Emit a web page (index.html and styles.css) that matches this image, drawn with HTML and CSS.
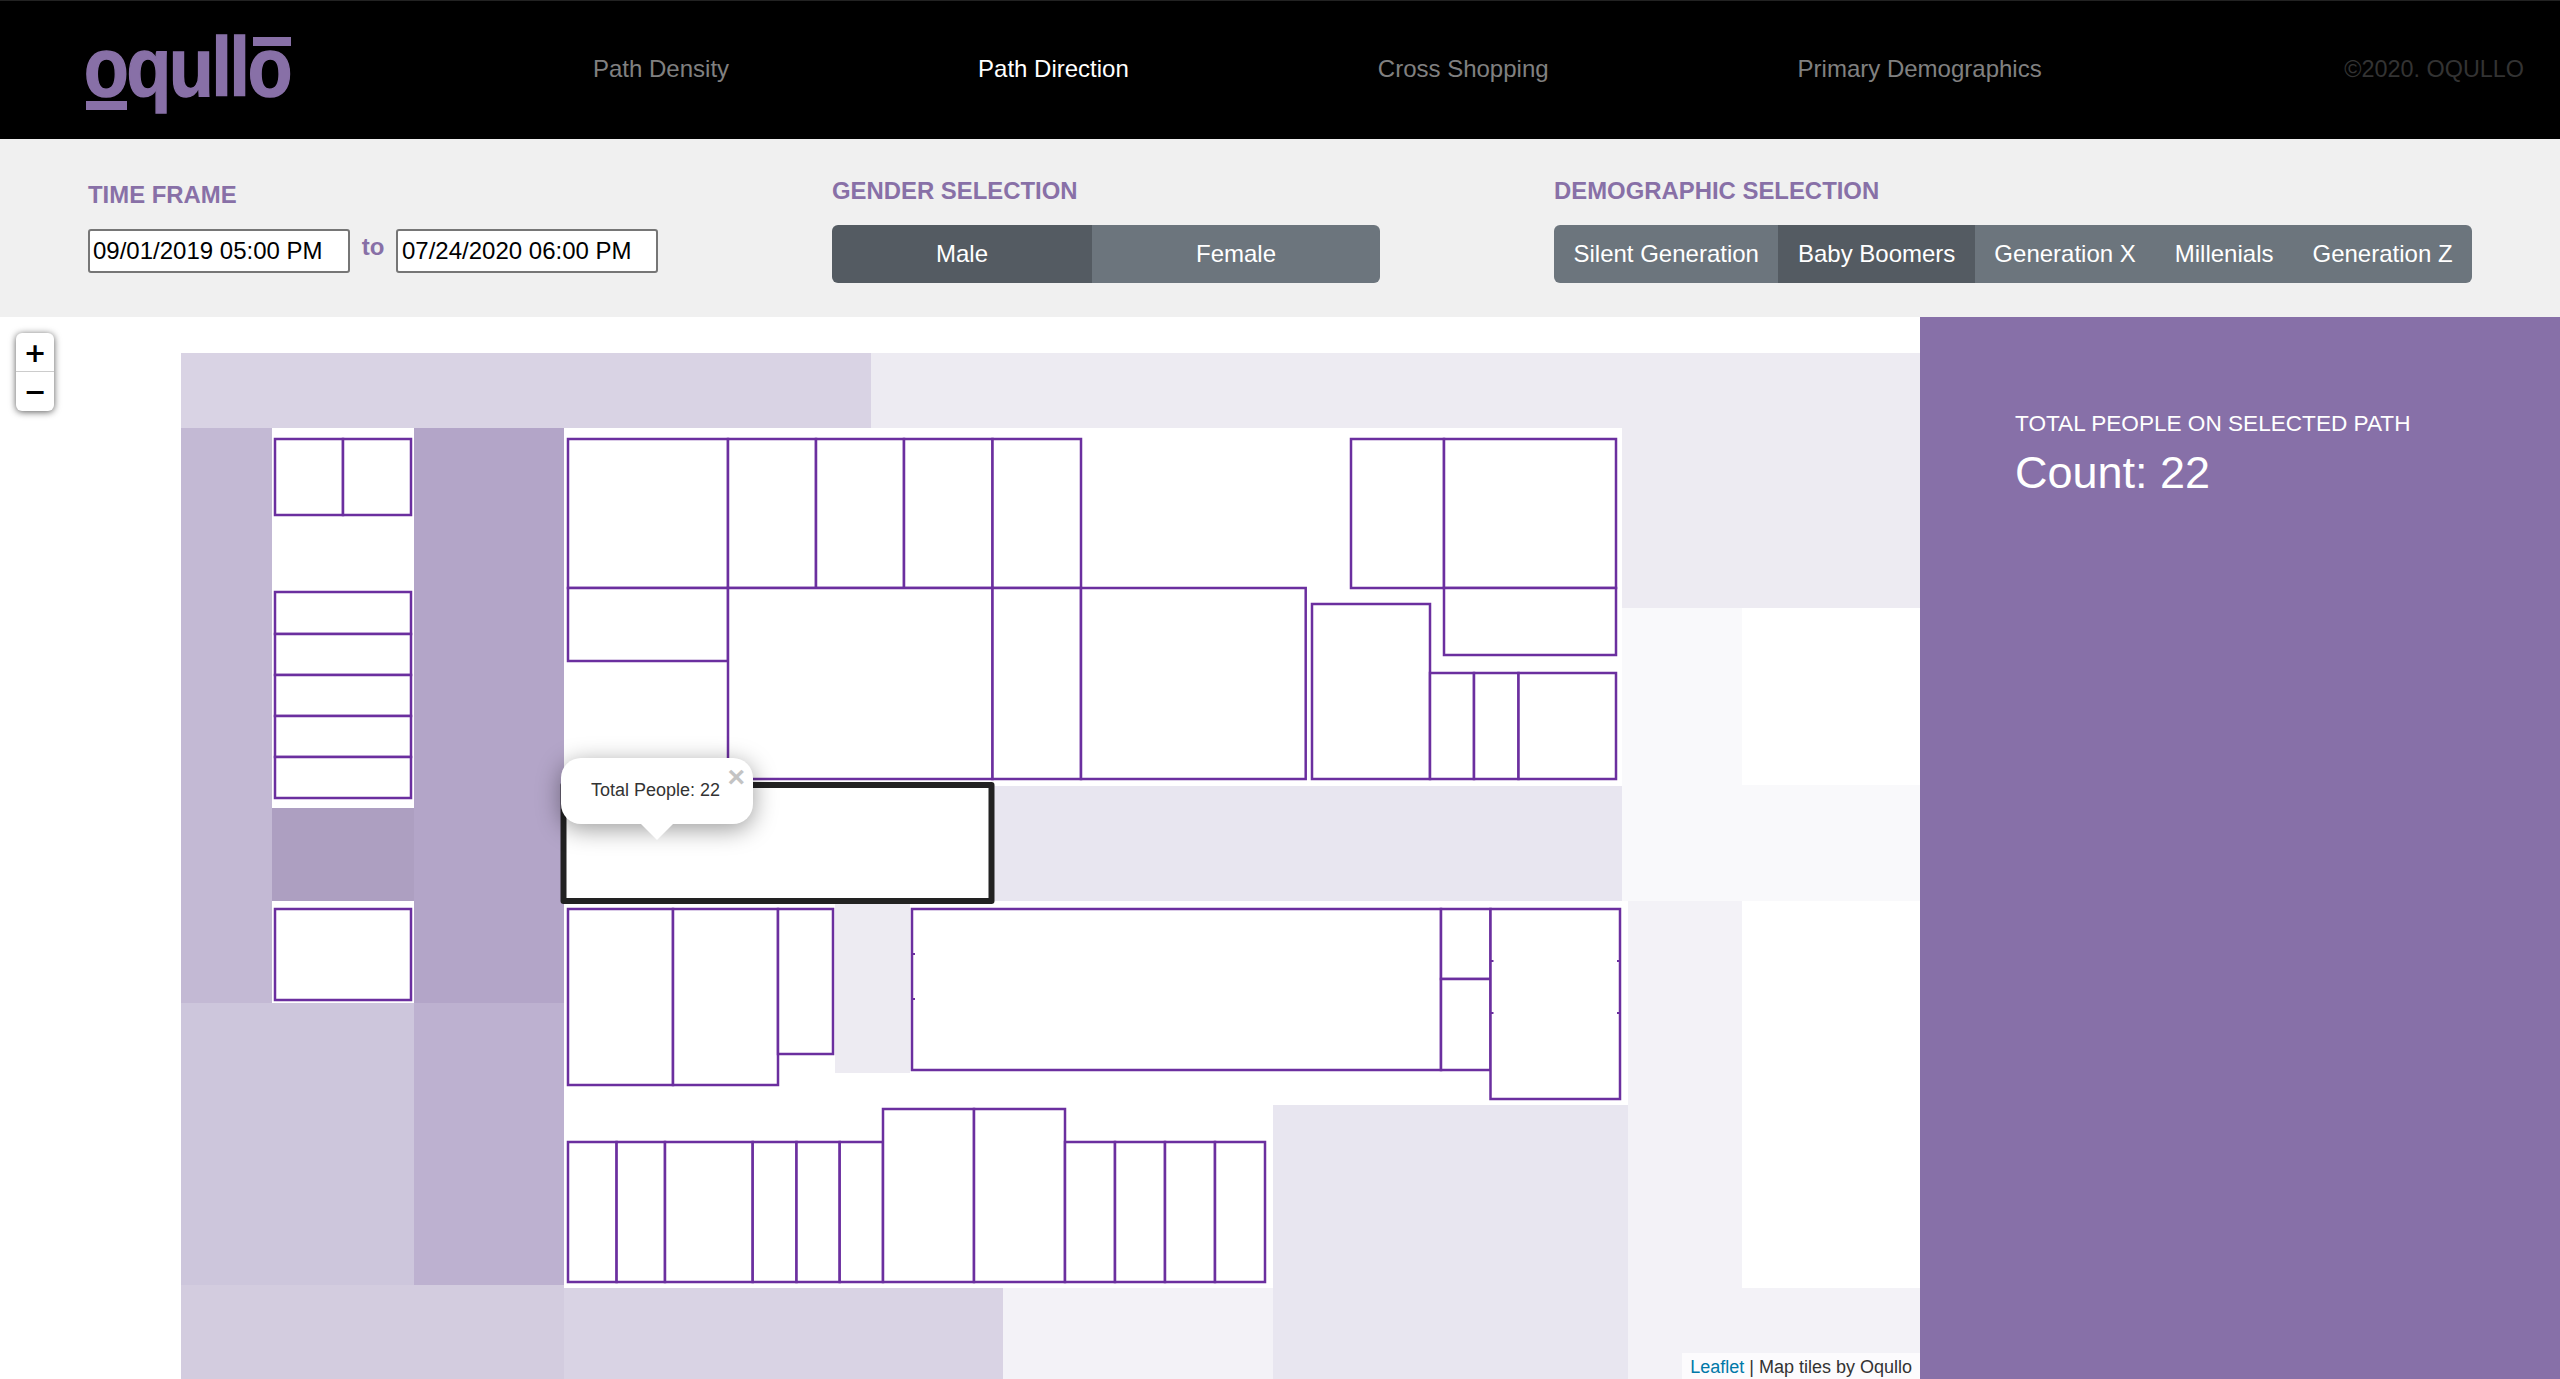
FILE: index.html
```html
<!DOCTYPE html>
<html lang="en">
<head>
  <meta charset="UTF-8">
  <title>Oqullo - Path Direction</title>
  <link rel="stylesheet" href="styles.css">
</head>
<body>
  <header class="topbar">
    <div class="logo"><span class="logo-text">oqullo</span><i class="logo-under"></i><i class="logo-over"></i></div>
    <nav class="nav">
      <a href="#">Path Density</a>
      <a href="#" class="active">Path Direction</a>
      <a href="#">Cross Shopping</a>
      <a href="#">Primary Demographics</a>
    </nav>
    <div class="copyright">©2020. OQULLO</div>
  </header>

  <section class="filters">
    <div class="filter filter-time">
      <h4>TIME FRAME</h4>
      <div class="dates">
        <input type="text" value="09/01/2019 05:00 PM">
        <span class="to">to</span>
        <input type="text" value="07/24/2020 06:00 PM">
      </div>
    </div>
    <div class="filter">
      <h4>GENDER SELECTION</h4>
      <div class="btn-group">
        <button class="btn btn-male selected">Male</button>
        <button class="btn btn-female">Female</button>
      </div>
    </div>
    <div class="filter">
      <h4>DEMOGRAPHIC SELECTION</h4>
      <div class="btn-group">
        <button class="btn">Silent Generation</button>
        <button class="btn selected">Baby Boomers</button>
        <button class="btn">Generation X</button>
        <button class="btn">Millenials</button>
        <button class="btn">Generation Z</button>
      </div>
    </div>
  </section>

  <main class="content">
    <div class="map">
      <svg class="floorplan" viewBox="0 317 1920 1062" width="1920" height="1062">
        <!-- heat tiles -->
        <g>
          <rect class="t-c" x="871" y="353" width="1049" height="75"/>
          <rect class="t-c" x="1622" y="428" width="298" height="180"/>
          <rect class="t-b" x="181" y="353" width="690" height="75"/>
          <rect class="t-f" x="1622" y="608" width="120" height="293"/>
          <rect class="t-f" x="1742" y="785" width="178" height="116"/>
          <rect class="t-d" x="994" y="786" width="628" height="115"/>
          <rect class="t-e" x="1628" y="901" width="114" height="478"/>
          <rect class="t-e" x="1742" y="1288" width="178" height="91"/>
          <rect class="t-e" x="1003" y="1288" width="270" height="91"/>
          <rect class="t-d" x="1273" y="1105" width="355" height="274"/>
          <rect class="t-c" x="835" y="901" width="75" height="172"/>
          <rect x="181" y="428" width="91" height="575" fill="#c3b9d4"/>
          <rect x="272" y="808" width="142" height="93" fill="#ad9fc1"/>
          <rect x="414" y="428" width="150" height="575" fill="#b3a5c8"/>
          <rect x="181" y="1003" width="233" height="282" fill="#cdc6dc"/>
          <rect x="414" y="1003" width="150" height="282" fill="#bdb1d0"/>
          <rect x="181" y="1285" width="383" height="94" fill="#d3ccdf"/>
          <rect class="t-b" x="564" y="1288" width="439" height="91"/>
        </g>
        <!-- stores -->
        <g class="rooms">
          <rect x="275" y="439" width="68" height="76"/>
          <rect x="343" y="439" width="68" height="76"/>
          <rect x="275" y="592" width="136" height="42"/>
          <rect x="275" y="634" width="136" height="41"/>
          <rect x="275" y="675" width="136" height="41"/>
          <rect x="275" y="716" width="136" height="41"/>
          <rect x="275" y="757" width="136" height="41"/>
          <rect x="275" y="909" width="136" height="91"/>

          <rect x="568" y="439" width="160" height="149"/>
          <rect x="728" y="439" width="88" height="149"/>
          <rect x="816" y="439" width="88" height="149"/>
          <rect x="904" y="439" width="88.500" height="149"/>
          <rect x="992.500" y="439" width="88.500" height="149"/>
          <rect x="568" y="588" width="160" height="73"/>
          <rect x="728" y="588" width="264.500" height="191"/>
          <rect x="992.500" y="588" width="88.500" height="191"/>
          <rect x="1081" y="588" width="224.700" height="191"/>

          <rect x="1351" y="439" width="93" height="149"/>
          <rect x="1444" y="439" width="172" height="149"/>
          <rect x="1444" y="588" width="172" height="67"/>
          <rect x="1312" y="604" width="118" height="175"/>
          <rect x="1430" y="673" width="44" height="106"/>
          <rect x="1474" y="673" width="44.500" height="106"/>
          <rect x="1518.500" y="673" width="97.500" height="106"/>

          <rect x="568" y="909" width="105" height="176"/>
          <rect x="673" y="909" width="105" height="176"/>
          <rect x="778" y="909" width="55" height="145"/>
          <rect x="912" y="909" width="529" height="161"/>
          <rect x="1441" y="909" width="49.500" height="70"/>
          <rect x="1441" y="979" width="49.500" height="91"/>
          <rect x="1490.500" y="909" width="129.500" height="190"/>

          <rect x="568" y="1142" width="48.600" height="140"/>
          <rect x="616.600" y="1142" width="48.400" height="140"/>
          <rect x="665" y="1142" width="87.700" height="140"/>
          <rect x="752.700" y="1142" width="43.800" height="140"/>
          <rect x="796.500" y="1142" width="43.200" height="140"/>
          <rect x="839.700" y="1142" width="43.300" height="140"/>
          <rect x="883" y="1109" width="91" height="173"/>
          <rect x="974" y="1109" width="91" height="173"/>
          <rect x="1065" y="1142" width="50" height="140"/>
          <rect x="1115" y="1142" width="50" height="140"/>
          <rect x="1165" y="1142" width="50" height="140"/>
          <rect x="1215" y="1142" width="50" height="140"/>
        </g>
        <g class="ticks">
          <path d="M912 954h3M912 999h3M1490.500 961h3M1490.500 1013h3M1617 961h3M1617 1013h3"/>
        </g>
        <rect class="selected-path" x="563.500" y="785" width="428" height="116"/>
      </svg>

      <div class="zoom-control">
        <a href="#" class="zoom-in">+</a>
        <a href="#" class="zoom-out">−</a>
      </div>

      <div class="popup">
        <a href="#" class="popup-close">×</a>
        <span>Total People: 22</span>
        <i class="popup-tip"></i>
      </div>

      <div class="attribution"><a href="#">Leaflet</a> | Map tiles by Oqullo</div>
    </div>

    <aside class="side-panel">
      <p class="side-title">TOTAL PEOPLE ON SELECTED PATH</p>
      <p class="side-count">Count: 22</p>
    </aside>
  </main>
</body>
</html>
```

FILE: styles.css
```css
/* General Styles */
body {
  margin: 0;
  height: 1379px;
  overflow: hidden;
  background-color: #fff;
  font-family: "Liberation Sans", Arial, sans-serif;
  font-size: 24px;
  color: #000;
}

a {
  text-decoration: none;
}

/* Header */
.topbar {
  display: flex;
  align-items: center;
  height: 139px;
  box-sizing: border-box;
  padding: 0 36px 0 84px;
  background-color: #000;
  border-top: 1px solid #222;
}

.logo {
  position: relative;
  width: 509px;
  height: 138px;
  overflow: hidden;
}

.logo-text {
  display: block;
  margin-top: 18px;
  font-size: 84px;
  font-weight: 700;
  line-height: 96px;
  letter-spacing: -2.500px;
  color: #8870a7;
  -webkit-text-stroke: 1.500px #8870a7;
  transform: scaleX(0.87);
  transform-origin: left;
}

.logo-under {
  position: absolute;
  left: 2px;
  top: 100px;
  width: 41px;
  height: 9px;
  background-color: #8870a7;
}

.logo-over {
  position: absolute;
  left: 169px;
  top: 36px;
  width: 38px;
  height: 9px;
  background-color: #8870a7;
}

.nav {
  display: flex;
  gap: 249px;
  padding-bottom: 2px;
}

.nav a {
  color: #808080;
}

.nav a.active {
  color: #fff;
}

.copyright {
  margin-left: auto;
  padding-bottom: 2px;
  font-size: 23.400px;
  color: #333;
}

/* Filters */
.filters {
  display: grid;
  grid-template-columns: 744px 722px 1fr;
  height: 178px;
  padding-left: 88px;
  background-color: #f0f0f0;
  box-sizing: border-box;
}

.filter {
  padding-top: 38px;
}

.filter-time {
  padding-top: 42px;
}

.filter h4 {
  margin: 0 0 20px;
  font-size: 23.900px;
  font-weight: 700;
  line-height: 28px;
  color: #8870a7;
}

.dates {
  display: flex;
  align-items: flex-start;
}

.dates input {
  width: 262px;
  height: 44px;
  padding: 0 3px;
  box-sizing: border-box;
  border: 2px solid #767676;
  border-radius: 3px;
  background-color: #fff;
  font-family: inherit;
  font-size: 24px;
  color: #000;
}

.dates input:last-child {
  padding-left: 4px;
}

.to {
  width: 46px;
  margin-top: 4px;
  font-weight: 700;
  line-height: 28px;
  text-align: center;
  color: #8870a7;
}

.btn-group {
  display: inline-flex;
  height: 58px;
  border-radius: 6px;
  overflow: hidden;
}

.btn {
  padding: 0 19.500px;
  border: none;
  background-color: #6c757d;
  font-family: inherit;
  font-size: 24px;
  color: #fff;
}

.btn.selected {
  background-color: #545b62;
}

.btn-male {
  width: 260px;
}

.btn-female {
  width: 288px;
}

/* Map */
.content {
  display: flex;
  height: 1062px;
}

.map {
  position: relative;
  width: 1920px;
  flex-shrink: 0;
  overflow: hidden;
}

.floorplan {
  display: block;
}

.t-b { fill: #d9d3e4; }
.t-c { fill: #edebf2; }
.t-d { fill: #e8e6f0; }
.t-e { fill: #f3f2f7; }
.t-f { fill: #f9f9fb; }

.rooms rect {
  fill: #fff;
  stroke: #6b2f9f;
  stroke-width: 2.500;
}

.ticks path {
  fill: none;
  stroke: #6b2f9f;
  stroke-width: 2;
}

.selected-path {
  fill: #fff;
  stroke: #222;
  stroke-width: 6;
  stroke-linejoin: round;
}

.zoom-control {
  position: absolute;
  left: 16px;
  top: 16px;
  width: 38px;
  border-radius: 6px;
  background-color: #fff;
  box-shadow: 0 1px 7px rgba(0, 0, 0, 0.65);
}

.zoom-control a {
  display: block;
  height: 39px;
  font-family: "DejaVu Sans", sans-serif;
  font-size: 27px;
  font-weight: 700;
  line-height: 40px;
  text-align: center;
  color: #000;
}

.zoom-in {
  border-bottom: 1px solid #ccc;
  box-sizing: border-box;
}

.popup {
  position: absolute;
  left: 561px;
  top: 441px;
  width: 192px;
  height: 66px;
  box-sizing: border-box;
  padding: 20px 0 0 30px;
  border-radius: 20px;
  background-color: #fff;
  box-shadow: 0 5px 24px rgba(0, 0, 0, 0.4);
  font-size: 18px;
  line-height: 24px;
  color: #333;
}

.popup-close {
  position: absolute;
  right: 8px;
  top: 4px;
  font-size: 30px;
  font-weight: 700;
  line-height: 30px;
  color: #c3c3c3;
}

.popup-tip {
  position: absolute;
  left: 80px;
  top: 66px;
  width: 0;
  height: 0;
  border-left: 16px solid transparent;
  border-right: 16px solid transparent;
  border-top: 16px solid #fff;
}

.attribution {
  position: absolute;
  right: 0;
  bottom: 0;
  height: 26px;
  padding: 0 8px;
  background-color: rgba(255, 255, 255, 0.7);
  font-size: 18px;
  line-height: 28px;
  color: #333;
}

.attribution a {
  color: #0078a8;
}

/* Side panel */
.side-panel {
  flex: 1;
  padding: 92px 0 0 95px;
  background-color: #8770a8;
  color: #fff;
}

.side-title {
  margin: 0;
  font-size: 22.600px;
  line-height: 30px;
}

.side-count {
  margin: 7px 0 0;
  font-size: 45px;
  line-height: 54px;
}
```
